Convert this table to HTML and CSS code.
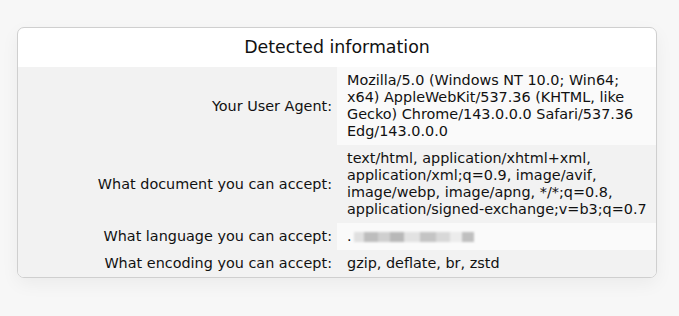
FILE: index.html
```html
<!DOCTYPE html>
<html lang="en">
<head>
    <meta charset="UTF-8">
    <meta name="viewport" content="width=device-width, initial-scale=1.0">
    <title>Detected information</title>
    <link rel="stylesheet" href="styles.css">
</head>
<body>
    <div class="card">
        <div class="card_title">Detected information</div>
        <div class="info">
            <div class="info_label">Your User Agent:</div>
            <div class="info_value info_value-light">Mozilla/5.0 (Windows NT 10.0; Win64; x64) AppleWebKit/537.36 (KHTML, like Gecko) Chrome/143.0.0.0 Safari/537.36 Edg/143.0.0.0</div>

            <div class="info_label">What document you can accept:</div>
            <div class="info_value">text/html, application/xhtml+xml, application/xml;q=0.9, image/avif, image/webp, image/apng, */*;q=0.8, application/signed-exchange;v=b3;q=0.7</div>

            <div class="info_label">What language you can accept:</div>
            <div class="info_value info_value-light">.<span class="blurred"></span></div>

            <div class="info_label">What encoding you can accept:</div>
            <div class="info_value">gzip, deflate, br, zstd</div>
        </div>
    </div>
</body>
</html>
```

FILE: styles.css
```css
body {
    margin: 0;
    padding: 27px 22px 40px 17px;
    background-color: #f7f7f7;
    color: #111;
    font-family: "DejaVu Sans", Verdana, sans-serif;
    font-size: 14.4px;
}
.card {
    background-color: white;
    border: 1px solid #cfcfcf;
    border-radius: 7px;
    box-shadow: 0 6px 18px rgba(0, 0, 0, 0.05);
    overflow: hidden;
}
.card_title {
    height: 39px;
    line-height: 39px;
    text-align: center;
    font-size: 17.4px;
}
.info {
    display: grid;
    grid-template-columns: 319px 1fr;
    line-height: 17px;
    background-color: #f2f2f2;
}
.info_label {
    display: flex;
    align-items: center;
    justify-content: flex-end;
    text-align: right;
    padding: 5px 5px 5px 0;
}
.info_value {
    padding: 5px 4px 5px 10px;
}
.info_value-light {
    background-color: #fafafa;
}
.blurred {
    display: inline-block;
    width: 120px;
    height: 10px;
    margin-left: 2px;
    vertical-align: -1px;
    background: linear-gradient(90deg, #e0e0e0 0 8%, #bdbdbd 8% 20%, #cfcfcf 20% 30%, #b8b8b8 30% 42%, #e2e2e2 42% 55%, #c4c4c4 55% 68%, #d8d8d8 68% 80%, #ececec 80% 90%, #bfbfbf 90% 100%);
    filter: blur(1px);
}
```
